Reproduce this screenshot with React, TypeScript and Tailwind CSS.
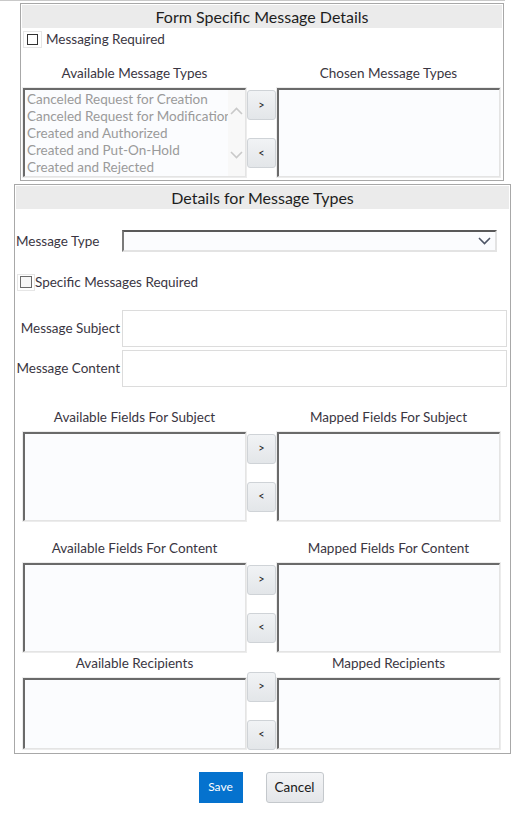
import type { ReactNode } from 'react'

const messageTypes = [
  'Canceled Request for Creation',
  'Canceled Request for Modification',
  'Created and Authorized',
  'Created and Put-On-Hold',
  'Created and Rejected',
]

function ListBox({ className = '', children }: { className?: string; children?: ReactNode }) {
  return (
    <div
      className={`w-[223px] border-t-2 border-l-2 border-r border-b border-t-[#6a6a6a] border-l-[#6a6a6a] border-r-[#e4e4e4] border-b-[#e4e4e4] bg-[#fbfcfe] shadow-[0_0_0_1px_#ececec] ${className}`}
    >
      {children}
    </div>
  )
}

function MoveButtons({ className = '' }: { className?: string }) {
  const btn =
    'w-[29px] h-[30px] rounded-[3px] border border-[#cfd3d7] bg-gradient-to-b from-[#f1f3f5] to-[#e3e6e9] text-[11px] text-[#222] flex items-center justify-center'
  return (
    <div className={`w-[31px] flex flex-col items-center gap-[18px] ${className}`}>
      <button className={btn}>&gt;</button>
      <button className={btn}>&lt;</button>
    </div>
  )
}

function Checkbox({ size = 'sm' }: { size?: 'sm' | 'lg' }) {
  return size === 'sm' ? (
    <span className="w-[19px] h-[17px] border border-[#e6e6e6] flex items-center justify-center">
      <span className="w-[11px] h-[11px] border border-[#333] bg-white" />
    </span>
  ) : (
    <span className="w-[18px] h-[17px] border border-[#e6e6e6] flex items-center justify-center">
      <span className="w-[12px] h-[12px] border border-[#6b6b6b] bg-[#f7f7f7]" />
    </span>
  )
}

function Chevron({ up = false, className = '' }: { up?: boolean; className?: string }) {
  return (
    <svg width="13" height="8" viewBox="0 0 13 8" className={className}>
      <polyline
        points={up ? '1,7 6.5,1.5 12,7' : '1,1 6.5,6.5 12,1'}
        fill="none"
        stroke="currentColor"
        strokeWidth="1.6"
      />
    </svg>
  )
}

function ListPair({
  left,
  right,
  listHeight,
  buttonsClass,
  leftContent,
}: {
  left: string
  right: string
  listHeight: string
  buttonsClass: string
  leftContent?: ReactNode
}) {
  return (
    <div>
      <div className="flex text-[13.5px] leading-[17px] text-[#3a3642]">
        <div className="w-[223px] text-center">{left}</div>
        <div className="w-[31px]" />
        <div className="w-[223px] text-center">{right}</div>
      </div>
      <div className="flex items-start mt-[6px]">
        <ListBox className={listHeight}>{leftContent}</ListBox>
        <MoveButtons className={buttonsClass} />
        <ListBox className={listHeight} />
      </div>
    </div>
  )
}

export default function App() {
  return (
    <div className="w-[522px] min-h-[818px] bg-white font-['Segoe_UI','Lato',sans-serif] text-[#3a3642]">
      <div className="w-[505px] h-px bg-[#c9c9c9]" />

      {/* Form specific message details */}
      <div className="ml-[20px] mt-[2px] w-[484px] border border-[#a8a8a8] pb-[3px]">
        <div className="mx-px mt-px h-[23px] bg-[#ebebeb] text-center text-[16px] leading-[23px] text-[#1e1e1e]">
          Form Specific Message Details
        </div>
        <div className="flex items-center gap-[4px] mt-[1px] ml-[2px] text-[13.5px]">
          <Checkbox />
          <span>Messaging Required</span>
        </div>
        <div className="mt-[16px] ml-[2px]">
          <ListPair
            left="Available Message Types"
            right="Chosen Message Types"
            listHeight="h-[89px]"
            buttonsClass="pt-[2px]"
            leftContent={
              <div className="flex h-full">
                <div className="flex-1 overflow-hidden pl-[2px] pt-px text-[13.5px] leading-[17px] text-[#9a9a9a] whitespace-nowrap">
                  {messageTypes.map(t => (
                    <div key={t}>{t}</div>
                  ))}
                </div>
                <div className="w-[17px] bg-[#f8f8f8] flex flex-col items-center justify-between py-[17px] text-[#c9c9c9]">
                  <Chevron up />
                  <Chevron />
                </div>
              </div>
            }
          />
        </div>
      </div>

      {/* Details for message types */}
      <div className="ml-[14px] mt-[3px] w-[497px] border border-[#a8a8a8] pb-[3px]">
        <div className="mx-px mt-px h-[23px] bg-[#ebebeb] text-center text-[16px] leading-[23px] text-[#1e1e1e]">
          Details for Message Types
        </div>

        <div className="flex items-center mt-[21px] text-[13.5px]">
          <span className="w-[107px] pl-px">Message Type</span>
          <div className="w-[375px] h-[22px] border-t-2 border-l-2 border-r-2 border-b-2 border-t-[#595959] border-l-[#7a7a7a] border-r-[#e3e3e3] border-b-[#e3e3e3] bg-[#fbfcfe] flex items-center justify-end pr-[4px] text-[#4d5566]">
            <Chevron />
          </div>
        </div>

        <div className="flex items-center mt-[20px] ml-[2px] text-[13.5px]">
          <Checkbox size="lg" />
          <span>Specific Messages Required</span>
        </div>

        <div className="flex items-center mt-[17px] text-[13.5px]">
          <span className="w-[107px] text-right pr-[2px]">Message Subject</span>
          <div className="w-[385px] h-[37px] border border-[#dcdcdc] bg-white" />
        </div>
        <div className="flex items-center mt-[3px] text-[13.5px]">
          <span className="w-[107px] text-right pr-[2px]">Message Content</span>
          <div className="w-[385px] h-[37px] border border-[#dcdcdc] bg-white" />
        </div>

        <div className="ml-[8px] mt-[22px]">
          <ListPair
            left="Available Fields For Subject"
            right="Mapped Fields For Subject"
            listHeight="h-[89px]"
            buttonsClass="pt-[2px]"
          />
        </div>
        <div className="ml-[8px] mt-[19px]">
          <ListPair
            left="Available Fields For Content"
            right="Mapped Fields For Content"
            listHeight="h-[89px]"
            buttonsClass="pt-[2px]"
          />
        </div>
        <div className="ml-[8px] mt-[3px]">
          <ListPair
            left="Available Recipients"
            right="Mapped Recipients"
            listHeight="h-[71px]"
            buttonsClass="-mt-[6px]"
          />
        </div>
      </div>

      <div className="flex justify-center gap-[23px] mt-[18px]">
        <button className="w-[44px] h-[31px] bg-[#0572ce] text-white text-[12px]">Save</button>
        <button className="w-[58px] h-[31px] rounded-[3px] border border-[#c4c8cc] bg-gradient-to-b from-[#f3f4f6] to-[#e4e6e9] text-[13.5px] text-[#1a1a1a]">
          Cancel
        </button>
      </div>
    </div>
  )
}
